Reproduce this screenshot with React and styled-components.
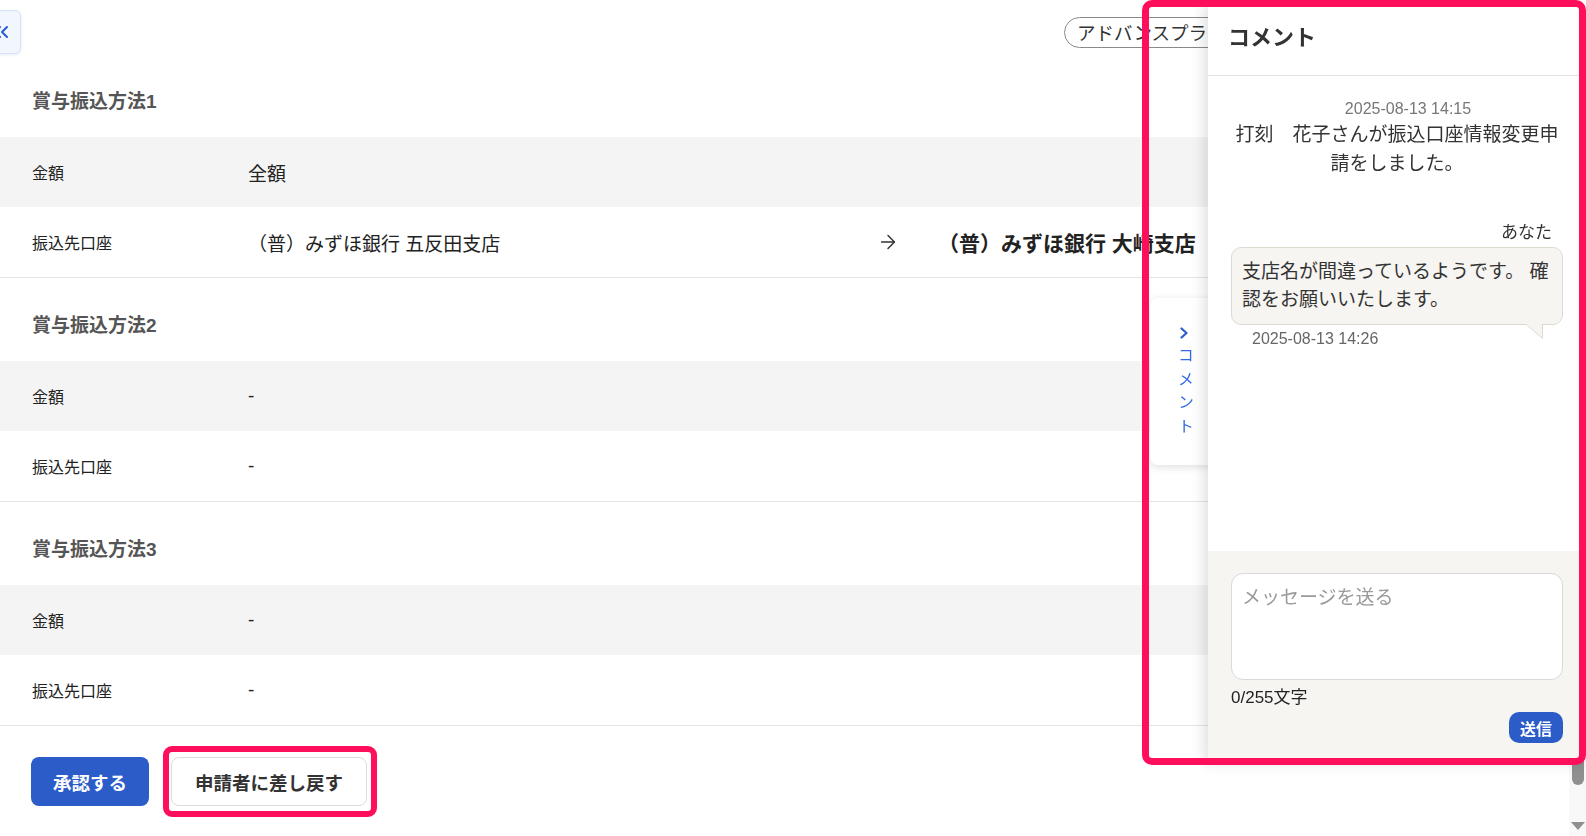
import React from 'react';
import styled, { createGlobalStyle } from 'styled-components';
import { ChevronsLeft, ArrowRight } from 'lucide-react';

const GlobalStyle = createGlobalStyle`
  html, body {
    margin: 0;
    padding: 0;
    height: 100%;
    overflow: hidden;
    background: #fff;
  }

  body {
    font-family: "Liberation Sans", "Noto Sans CJK JP", sans-serif;
    color: #222;
  }

  button, textarea {
    font-family: inherit;
  }

  * {
    box-sizing: border-box;
  }
`;

const Page = styled.div`
  display: flex;
  height: 100vh;
`;

const Main = styled.main`
  flex: 1;
  min-width: 0;
  display: flex;
  flex-direction: column;
`;

const Toolbar = styled.div`
  display: flex;
  align-items: flex-start;
  height: 56px;
  padding-top: 10px;
`;

const CollapseButton = styled.button`
  width: 41px;
  height: 44px;
  margin-left: -20px;
  padding: 0;
  display: flex;
  align-items: center;
  justify-content: center;
  background: #f1f6ff;
  border: 1px solid #d8e3f7;
  border-radius: 6px;
  box-shadow: 0 1px 3px rgba(40, 80, 160, 0.12);
  color: #2a5bd0;
`;

const PlanBadge = styled.span`
  margin-left: 1043px;
  margin-top: 7px;
  height: 31px;
  padding: 0 12px 2px;
  display: inline-flex;
  align-items: center;
  border: 1px solid #8a8a8a;
  border-radius: 16px;
  font-size: 18.5px;
  color: #333;
  white-space: nowrap;
`;

const Section = styled.section`
  border-bottom: 1px solid #e4e4e4;
`;

const SectionTitle = styled.h3`
  margin: 0;
  padding: 36px 32px 24px;
  font-size: 19px;
  line-height: 23px;
  font-weight: 700;
  color: #555;
`;

const Row = styled.div`
  display: grid;
  grid-template-columns: 216px 629px 66px 1fr;
  align-items: center;
  height: 70px;
  padding: 0 32px;
  background: ${(p) => (p.$shaded ? '#f5f4f4' : '#fff')};
`;

const Label = styled.div`
  font-size: 16px;
  color: #222;
`;

const Value = styled.div`
  font-size: 19px;
  color: #222;
  white-space: nowrap;
`;

const ChangeArrow = styled(ArrowRight)`
  color: #333;
`;

const NewValue = styled.div`
  margin-left: -5px;
  font-size: 21px;
  font-weight: 700;
  color: #222;
  white-space: nowrap;
`;

const Actions = styled.div`
  display: flex;
  gap: 22px;
  padding: 31px;
`;

const PrimaryButton = styled.button`
  height: 49px;
  padding: 0 22px;
  background: #2b5cc8;
  color: #fff;
  border: none;
  border-radius: 8px;
  font-size: 18.5px;
  font-weight: 700;
`;

const SecondaryButton = styled.button`
  height: 49px;
  padding: 0 23px;
  background: #fff;
  color: #333;
  border: 1px solid #dcdcdc;
  border-radius: 8px;
  font-size: 18.5px;
  font-weight: 700;
`;

const Highlighted = styled.div`
  position: relative;
`;

const HighlightFrame = styled.div`
  position: absolute;
  top: -11px;
  left: -8px;
  right: -10px;
  bottom: -11px;
  border: 6px solid #ff0f5b;
  border-radius: 9px;
  pointer-events: none;
`;

const ScrollTrack = styled.div`
  width: 17px;
  flex-shrink: 0;
  background: #f8f8f8;
  display: flex;
  flex-direction: column;
  align-items: center;
  padding: 100px 0 6px;
`;

const ScrollThumb = styled.div`
  width: 12px;
  height: 685px;
  border-radius: 6px;
  background: #8f8f8f;
`;

const ScrollArrow = styled.div`
  margin-top: auto;
  width: 0;
  height: 0;
  border-left: 7px solid transparent;
  border-right: 7px solid transparent;
  border-top: 8px solid #8f8f8f;
`;

/* comment drawer docked to the right edge */
const DrawerDock = styled.div`
  position: fixed;
  top: 0;
  right: 0;
  height: 758px;
  display: flex;
  align-items: flex-start;
  z-index: 10;
`;

const DrawerTab = styled.button`
  margin-top: 298px;
  margin-right: -10px;
  width: 68px;
  height: 167px;
  padding: 29px 0 0;
  display: flex;
  flex-direction: column;
  align-items: center;
  gap: 8px;
  background: #fff;
  border: none;
  border-radius: 8px;
  box-shadow: 0 2px 8px rgba(0, 0, 0, 0.13);
  color: #2a5bd0;
`;

const TabText = styled.span`
  writing-mode: vertical-rl;
  font-size: 16px;
  letter-spacing: 7.5px;
  color: #3168e6;
`;

const Drawer = styled.aside`
  position: relative;
  width: 378px;
  height: 100%;
  display: flex;
  flex-direction: column;
  background: #fff;
  box-shadow: -3px 4px 14px rgba(0, 0, 0, 0.14);
`;

const DrawerHeader = styled.header`
  height: 76px;
  flex-shrink: 0;
  display: flex;
  align-items: center;
  padding: 0 20px 6px;
  border-bottom: 1px solid #e2e2e2;
`;

const DrawerTitle = styled.h2`
  margin: 0;
  font-size: 22px;
  font-weight: 700;
  color: #333;
`;

const MessageList = styled.div`
  flex: 1;
  padding: 22px 23px 0;
  display: flex;
  flex-direction: column;
`;

const SystemNote = styled.div`
  text-align: center;
`;

const NoteTime = styled.div`
  padding-left: 22px;
  font-size: 16px;
  line-height: 22px;
  color: #777;
`;

const NoteText = styled.div`
  font-size: 19px;
  line-height: 29px;
  color: #333;
`;

const Author = styled.div`
  margin-top: 44px;
  text-align: right;
  padding-right: 11px;
  font-size: 17px;
  line-height: 22px;
  color: #333;
`;

const Bubble = styled.div`
  position: relative;
  margin-top: 3px;
  padding: 10px 8px 10px 10px;
  background: #f6f5f2;
  border: 1px solid #dedad2;
  border-radius: 10px;
  font-size: 19px;
  line-height: 28px;
  color: #333;
`;

const BubbleTail = styled.svg`
  position: absolute;
  right: 18px;
  bottom: -16px;
`;

const MessageTime = styled.div`
  margin-top: 3px;
  padding-left: 21px;
  font-size: 16px;
  line-height: 22px;
  color: #666;
`;

const Composer = styled.div`
  flex-shrink: 0;
  display: flex;
  flex-direction: column;
  padding: 22px 23px 15px;
  background: #f6f5f2;
`;

const MessageInput = styled.textarea`
  height: 107px;
  padding: 11px 10px;
  resize: none;
  outline: none;
  background: #fff;
  border: 1px solid #d9d9d9;
  border-radius: 12px;
  font-size: 19px;
  line-height: 26px;
  color: #333;

  &::placeholder {
    color: #9a9a9a;
  }
`;

const Counter = styled.div`
  margin-top: 7px;
  font-size: 17px;
  line-height: 22px;
  color: #222;
`;

const SendButton = styled.button`
  align-self: flex-end;
  margin-top: 3px;
  height: 31px;
  padding: 0 11px;
  background: #2b5cc8;
  color: #fff;
  border: none;
  border-radius: 10px;
  font-size: 16px;
  font-weight: 700;
`;

const PanelFrame = styled.div`
  position: fixed;
  top: 0;
  right: 0;
  width: 444px;
  height: 765px;
  border: 7px solid #ff0f5b;
  border-radius: 10px;
  pointer-events: none;
  z-index: 20;
`;

const methods = [
  {
    title: '賞与振込方法1',
    amount: '全額',
    account: '（普）みずほ銀行 五反田支店',
    newAccount: '（普）みずほ銀行 大崎支店',
  },
  { title: '賞与振込方法2', amount: '-', account: '-' },
  { title: '賞与振込方法3', amount: '-', account: '-' },
];

const TabChevron = () => (
  <svg width="10" height="12" viewBox="0 0 10 12">
    <polyline
      points="2.5,1.5 7.5,6 2.5,10.5"
      fill="none"
      stroke="currentColor"
      strokeWidth="2.2"
      strokeLinecap="round"
      strokeLinejoin="round"
    />
  </svg>
);

const App = () => {
  return (
    <>
      <GlobalStyle />
      <Page>
        <Main>
          <Toolbar>
            <CollapseButton aria-label="閉じる">
              <ChevronsLeft size={24} strokeWidth={2} />
            </CollapseButton>
            <PlanBadge>アドバンスプラン</PlanBadge>
          </Toolbar>

          {methods.map((m) => (
            <Section key={m.title}>
              <SectionTitle>{m.title}</SectionTitle>
              <Row $shaded>
                <Label>金額</Label>
                <Value>{m.amount}</Value>
              </Row>
              <Row>
                <Label>振込先口座</Label>
                <Value>{m.account}</Value>
                {m.newAccount && (
                  <>
                    <ChangeArrow size={22} strokeWidth={1.6} />
                    <NewValue>{m.newAccount}</NewValue>
                  </>
                )}
              </Row>
            </Section>
          ))}

          <Actions>
            <PrimaryButton>承認する</PrimaryButton>
            <Highlighted>
              <SecondaryButton>申請者に差し戻す</SecondaryButton>
              <HighlightFrame />
            </Highlighted>
          </Actions>
        </Main>

        <ScrollTrack>
          <ScrollThumb />
          <ScrollArrow />
        </ScrollTrack>
      </Page>

      <DrawerDock>
        <DrawerTab>
          <TabChevron />
          <TabText>コメント</TabText>
        </DrawerTab>
        <Drawer>
          <DrawerHeader>
            <DrawerTitle>コメント</DrawerTitle>
          </DrawerHeader>

          <MessageList>
            <SystemNote>
              <NoteTime>2025-08-13 14:15</NoteTime>
              <NoteText>打刻　花子さんが振込口座情報変更申請をしました。</NoteText>
            </SystemNote>

            <Author>あなた</Author>
            <Bubble>
              支店名が間違っているようです。 確認をお願いいたします。
              <BubbleTail width="18" height="16" viewBox="0 0 18 16">
                <path d="M0 0 L17 0 L17 15 Z" fill="#f6f5f2" />
                <path d="M0.5 0.5 L16.5 14.5 L16.5 0" fill="none" stroke="#dedad2" strokeWidth="1" />
              </BubbleTail>
            </Bubble>
            <MessageTime>2025-08-13 14:26</MessageTime>
          </MessageList>

          <Composer>
            <MessageInput placeholder="メッセージを送る" />
            <Counter>0/255文字</Counter>
            <SendButton>送信</SendButton>
          </Composer>
        </Drawer>
      </DrawerDock>

      <PanelFrame />
    </>
  );
};

export default App;
